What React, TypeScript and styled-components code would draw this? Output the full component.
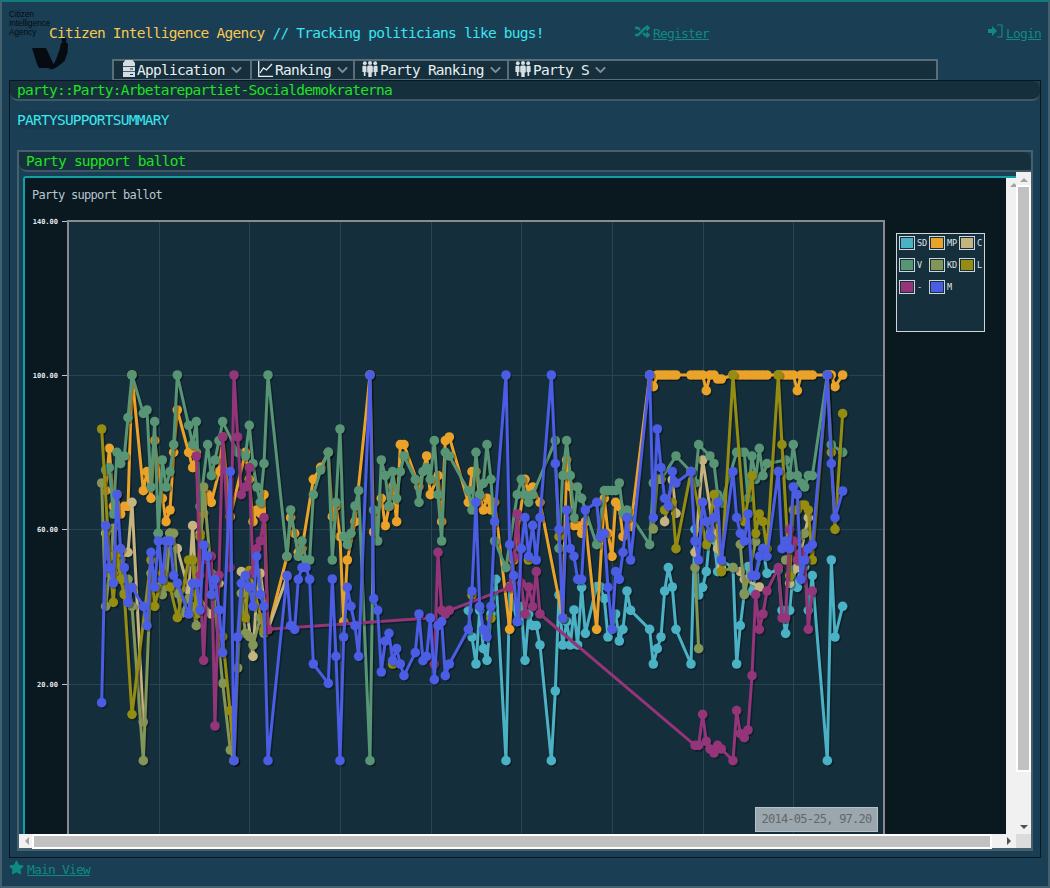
import React from "react";
import styled, { createGlobalStyle } from "styled-components";
import { FaChevronDown, FaRandom, FaStar } from "react-icons/fa";

const GlobalStyle = createGlobalStyle`
  html, body {
    margin: 0;
    padding: 0;
    background: #1a3e54;
    font-family: "DejaVu Sans Mono", "Liberation Mono", monospace;
    font-size: 14.5px;
    letter-spacing: -0.75px;
  }
`;

const Page = styled.div`
  box-sizing: border-box;
  width: 1050px;
  height: 888px;
  overflow: hidden;
  background: #1a3e54;
  border: 2px solid #42606e;
  border-top-color: #127b78;
`;

const Header = styled.header`
  display: grid;
  grid-template-columns: 7px 40px 586px 353px 1fr;
  height: 57px;
`;

const LogoBlock = styled.div`
  grid-column: 2;
  padding-top: 8px;
`;

const LogoText = styled.div`
  font-family: "Liberation Sans", Arial, sans-serif;
  font-size: 8.2px;
  line-height: 9px;
  letter-spacing: 0;
  color: #050b10;
  white-space: nowrap;
`;

const LogoMark = styled.svg`
  display: block;
  width: 40px;
  height: 36px;
  margin: 0 0 0 20px;
`;

const Title = styled.h1`
  margin: 0;
  padding-top: 22px;
  font-size: 14.5px;
  line-height: 18px;
  font-weight: 400;
  color: #3be6f0;
  white-space: nowrap;
`;

const TitleAccent = styled.span`
  color: #f9c851;
`;

const HeaderLink = styled.div`
  display: flex;
  align-items: center;
  gap: 3px;
  height: 18px;
  margin-top: 22px;
  color: #0f8a80;
  svg {
    width: 15px;
    height: 15px;
    flex: none;
    margin-top: -3px;
  }
`;

const LinkText = styled.a`
  font-size: 13px;
  letter-spacing: -0.83px;
  color: #0f8a80;
  text-decoration: underline;
`;

const MenuBar = styled.nav`
  box-sizing: border-box;
  display: flex;
  align-items: stretch;
  width: 826px;
  height: 21px;
  margin-left: 110px;
  background: #162f3d;
  border: 2px solid #5a6e7a;
  border-bottom-width: 1px;
`;

const MenuItem = styled.div<{ $width: number; $pad: number }>`
  box-sizing: border-box;
  display: flex;
  align-items: center;
  gap: 2px;
  width: ${(props) => props.$width}px;
  padding-left: ${(props) => props.$pad}px;
  border-right: 2px solid #5a6e7a;
  color: #e8eef0;
  white-space: nowrap;
  &:last-child {
    border-right: 0;
  }
`;

const MenuIcon = styled.svg`
  flex: none;
  margin-top: -3px;
`;

const Chevron = styled(FaChevronDown)`
  flex: none;
  width: 13px;
  height: 12px;
  margin-left: 3px;
  color: #7d909a;
`;

const Panel = styled.main`
  box-sizing: border-box;
  width: 1032px;
  height: 778px;
  margin-left: 7px;
  border: 1px solid #08161d;
`;

const PathBar = styled.div`
  box-sizing: border-box;
  height: 20px;
  padding-left: 7px;
  background: #162f3d;
  border-bottom: 2px solid #3e5866;
  border-radius: 0 8px 8px 8px;
  color: #1fe21f;
  line-height: 18px;
  white-space: nowrap;
`;

const SectionLabel = styled.div`
  width: fit-content;
  height: 18px;
  margin: 10px 0 0 7px;
  border-radius: 8px;
  background: rgba(0, 0, 0, 0.05);
  color: #3be6f0;
  line-height: 18px;
`;

const InnerPanel = styled.section`
  box-sizing: border-box;
  width: 1016px;
  height: 701px;
  margin: 21px 0 0 7px;
  border: 2px solid #47606d;
  border-bottom-width: 3px;
`;

const InnerHeader = styled.div`
  box-sizing: border-box;
  height: 20px;
  padding-left: 7px;
  background: #162f3d;
  border-bottom: 2px solid #3e5866;
  border-radius: 0 8px 0 8px;
  color: #1fe21f;
  line-height: 18px;
`;

const ScrollFrame = styled.div`
  display: grid;
  grid-template-columns: 997px 15px;
  grid-template-rows: 662px 14px;
`;

const Viewport = styled.div`
  overflow: hidden;
  background: #1a3e54;
`;

const Card = styled.div`
  box-sizing: border-box;
  display: flex;
  width: 1000px;
  height: 708px;
  margin: 4px;
  border: 2px solid #12a0a8;
  border-radius: 3px 0 0 0;
  background: #0a1920;
  overflow: hidden;
`;

const CardBody = styled.div`
  position: relative;
  flex: none;
  width: 981px;
  height: 800px;
`;

const InnerTrack = styled.div`
  flex: none;
  display: flex;
  justify-content: center;
  width: 15px;
  padding-top: 5px;
  background: #f1f1f1;
`;

const VBar = styled.div`
  display: flex;
  flex-direction: column;
  align-items: center;
  background: #f1f1f1;
`;

const HBar = styled.div`
  display: flex;
  align-items: center;
  background: #f1f1f1;
`;

const ArrowCell = styled.div`
  flex: none;
  display: flex;
  align-items: center;
  justify-content: center;
  width: 15px;
  height: 15px;
`;

const Arrow = styled.span<{ $dir: "up" | "down" | "left" | "right"; $dark?: boolean }>`
  display: block;
  width: 0;
  height: 0;
  border: 4px solid transparent;
  ${(props) => `border-${{ up: "bottom", down: "top", left: "right", right: "left" }[props.$dir]}-color: ${props.$dark ? "#505050" : "#a3a3a3"};`}
  ${(props) => `border-${props.$dir === "up" ? "top" : props.$dir === "down" ? "bottom" : props.$dir}-width: 0;`}
`;

const VThumb = styled.div`
  width: 11px;
  height: 583px;
  margin-bottom: auto;
  background: #c1c1c1;
  box-shadow: 0 0 0 2px #fff;
`;

const HThumb = styled.div`
  width: 956px;
  height: 11px;
  margin-right: auto;
  background: #c1c1c1;
  box-shadow: 0 0 0 2px #fff;
`;

const Corner = styled.div`
  background: #dcdcdc;
`;

const ChartTitle = styled.div`
  height: 30px;
  padding: 9px 0 0 7px;
  box-sizing: border-box;
  color: #b9c6cf;
  font-size: 12px;
  letter-spacing: -0.72px;
  line-height: 16px;
`;

const ChartSvg = styled.svg`
  display: block;
`;

const TickLabel = styled.text`
  fill: #e4e9ec;
  font-family: "DejaVu Sans Mono", monospace;
  font-size: 7px;
  font-weight: 700;
  letter-spacing: 0;
`;

const Legend = styled.div`
  position: absolute;
  left: 871px;
  top: 55px;
  box-sizing: border-box;
  width: 89px;
  height: 99px;
  padding: 2px;
  display: grid;
  grid-template-columns: repeat(3, 30px);
  grid-auto-rows: 22px;
  background: #152f3d;
  border: 1px solid #cfd6da;
`;

const LegendEntry = styled.div`
  display: flex;
  gap: 2px;
  height: 14px;
  color: #dfe5e8;
  font-size: 8.5px;
  letter-spacing: 0;
  line-height: 14px;
`;

const Swatch = styled.span<{ $color: string }>`
  box-sizing: border-box;
  flex: none;
  width: 16px;
  height: 14px;
  border: 1px solid #cfd6da;
  box-shadow: inset 0 0 0 1px #152f3d;
  background: ${(props) => props.$color};
`;

const Tooltip = styled.div`
  position: absolute;
  left: 730px;
  top: 629px;
  box-sizing: border-box;
  width: 123px;
  height: 25px;
  background: #9aa7ae;
  border: 1px solid #b7c2c8;
  color: #666;
  font-size: 12px;
  letter-spacing: -0.75px;
  line-height: 23px;
  text-align: center;
  white-space: nowrap;
`;

const Footer = styled.footer`
  display: flex;
  align-items: center;
  gap: 3px;
  height: 20px;
  margin: 1px 0 0 7px;
  color: #0f8a80;
  svg {
    width: 15px;
    height: 15px;
    margin-top: -4px;
  }
`;

type Pt = [number, number];

// points read off the reference, in crop coordinates (3x), one crop per chunk of the plot
const crop = (offset: number, flat: number[]): Pt[] => {
  const out: Pt[] = [];
  for (let i = 0; i < flat.length; i += 2) out.push([offset + flat[i] / 3, 360 + flat[i + 1] / 3]);
  return out;
};

const A = 60;
const B = 320;
const C = 600;

const SERIES: { name: string; color: string; segments: Pt[][] }[] = [
  {
    name: "SD",
    color: "#4bb2c5",
    segments: [
      [
        ...crop(B, [445, 751, 456, 831, 468, 912, 479, 751, 490, 866, 501, 901, 513, 762, 528, 658, 558, 1202, 569, 680, 581, 740, 592, 785, 604, 740, 615, 901, 626, 762, 638, 797, 649, 797, 660, 855, 694, 1202, 706, 993, 717, 705, 728, 855, 740, 785, 751, 855, 762, 750, 773, 855, 785, 682, 796, 820, 830, 680]),
        ...crop(C, [0, 680, 13, 716, 24, 831, 36, 808, 47, 762, 58, 843, 69, 808, 81, 693, 92, 751, 149, 808, 160, 912, 172, 866, 183, 831, 194, 693, 205, 623, 217, 681, 228, 808, 273, 912, 285, 508, 296, 705, 308, 682, 319, 635, 330, 520, 342, 540, 353, 635, 364, 600, 399, 623, 410, 912, 421, 797, 433, 700, 444, 620, 456, 693, 467, 647, 489, 566, 501, 640, 535, 630, 546, 751, 557, 820, 569, 751, 580, 630, 592, 682, 603, 600, 614, 620, 625, 751, 637, 647, 682, 1202, 694, 600, 705, 831, 728, 739]),
      ],
    ],
  },
  {
    name: "MP",
    color: "#eaa228",
    segments: [
      [
        ...crop(A, [137, 392, 148, 265, 160, 439, 171, 404, 182, 462, 193, 439, 204, 439, 216, 45, 250, 392, 261, 335, 273, 415, 284, 242, 307, 415, 318, 485, 330, 450, 341, 277, 352, 150, 386, 277, 398, 323, 409, 277, 420, 520, 431, 460, 443, 404, 454, 427, 477, 335, 488, 231, 511, 470, 556, 277, 568, 358, 579, 485, 590, 450, 601, 460, 612, 404, 624, 810, 681, 590, 692, 473, 704, 520, 715, 577, 726, 566, 760, 358, 782, 322]),
        ...crop(B, [25, 277, 37, 470, 48, 438, 60, 530, 71, 785, 82, 600, 105, 485, 150, 45, 161, 516, 184, 415, 196, 497, 207, 440, 218, 380, 230, 485, 241, 254, 252, 254, 297, 380, 320, 288, 331, 404, 354, 347, 365, 485, 376, 242, 388, 231, 445, 427, 456, 335, 468, 335, 479, 404, 490, 450, 501, 415, 513, 450, 524, 427, 569, 808, 581, 600, 615, 358, 626, 404, 638, 381, 660, 427, 728, 774, 740, 300, 751, 380, 762, 497, 773, 497, 785, 520, 796, 485, 830, 808]),
        ...crop(C, [13, 415, 24, 520, 36, 589, 47, 427, 58, 440, 69, 530, 92, 500, 149, 45, 160, 80, 172, 45, 183, 45, 194, 45, 205, 45, 217, 45, 228, 45, 273, 45, 285, 45, 296, 45, 308, 45, 319, 92, 330, 45, 342, 45, 353, 57, 364, 57, 399, 45, 410, 45, 421, 45, 433, 45, 444, 45, 456, 45, 467, 45, 478, 45, 489, 45, 501, 45, 535, 45, 546, 45, 557, 45, 569, 45, 580, 45, 592, 92, 603, 45, 614, 45, 625, 45, 637, 45, 682, 45, 694, 45, 705, 80, 728, 45]),
      ],
    ],
  },
  {
    name: "C",
    color: "#c5b47f",
    segments: [
      crop(A, [137, 520, 160, 640, 182, 600, 204, 577, 216, 427, 250, 1086]),
      crop(A, [295, 520, 307, 680, 330, 520, 352, 566, 386, 690, 398, 497, 409, 700, 454, 762, 477, 670]),
      crop(A, [544, 635, 579, 889, 590, 700, 601, 640, 624, 808, 681, 650]),
      crop(C, [194, 485, 217, 360, 228, 460]),
      crop(C, [285, 577, 308, 300, 342, 520, 353, 566, 364, 623]),
      crop(C, [421, 635, 433, 658, 478, 681]),
      crop(C, [569, 670, 592, 623, 625, 473]),
    ],
  },
  {
    name: "V",
    color: "#579575",
    segments: [
      [
        ...crop(A, [137, 330, 148, 323, 160, 462, 171, 277, 182, 311, 193, 288, 204, 173, 216, 45, 250, 160, 261, 150, 273, 381, 284, 185, 295, 520, 307, 300, 318, 381, 330, 335, 341, 254, 352, 45, 386, 196, 398, 254, 409, 185, 420, 439, 443, 254, 454, 347, 465, 300, 477, 242, 488, 185, 533, 277, 556, 288, 568, 196, 579, 311, 590, 381, 601, 427, 612, 311, 624, 45, 681, 589, 692, 450, 715, 589, 726, 543, 738, 600, 749, 600, 760, 404, 782, 330]),
        ...crop(B, [25, 277, 37, 600, 48, 427, 60, 207, 71, 530, 82, 554, 93, 520, 105, 438, 116, 392, 150, 1202, 161, 450, 173, 543, 184, 300, 196, 347, 207, 438, 218, 335, 230, 415, 241, 335, 252, 288, 286, 358, 297, 427, 309, 335, 320, 323, 331, 358, 343, 242, 354, 404, 365, 543, 376, 277, 388, 288, 445, 392, 456, 450, 468, 277, 479, 404, 490, 370, 501, 254, 513, 358, 524, 543, 558, 623, 592, 404, 604, 358, 615, 404, 626, 427, 638, 404, 706, 242, 717, 565, 728, 347, 740, 242, 751, 347, 762, 473, 773, 381, 785, 415, 830, 554]),
        ...crop(C, [13, 392, 24, 392, 36, 392, 47, 392, 58, 369, 69, 460, 81, 450, 149, 554, 160, 369, 172, 358, 183, 358, 228, 288, 273, 335, 285, 369, 296, 254, 330, 288, 342, 311, 353, 404, 364, 430, 410, 277, 421, 277, 433, 277, 444, 415, 456, 288, 467, 358, 478, 265, 489, 347, 501, 311, 557, 300, 569, 347, 580, 254, 592, 347, 603, 369, 614, 381, 625, 347, 637, 347, 682, 45, 694, 254, 728, 277]),
      ],
    ],
  },
  {
    name: "KD",
    color: "#839557",
    segments: [
      crop(A, [125, 369, 137, 739, 148, 640, 160, 505, 171, 600, 182, 600, 193, 700, 204, 658, 216, 739, 250, 1202, 273, 640, 295, 681, 307, 704, 318, 680, 330, 520, 341, 520, 352, 700, 364, 760, 386, 716, 398, 739, 409, 797, 431, 381, 454, 640, 488, 970, 511, 1170, 522, 1202, 533, 924, 544, 700, 556, 820, 568, 830, 579, 855, 601, 773, 612, 820]),
      crop(C, [160, 507, 172, 358, 183, 358]),
      crop(C, [285, 623, 296, 866]),
      crop(C, [364, 635, 399, 623]),
      crop(C, [421, 553, 433, 704, 467, 545]),
      crop(C, [557, 600, 614, 520]),
    ],
  },
  {
    name: "L",
    color: "#958c12",
    segments: [
      crop(A, [125, 207, 148, 590, 160, 727, 171, 580, 182, 658, 193, 704, 216, 1063, 273, 600, 284, 739, 307, 640, 330, 681, 352, 773, 386, 600, 398, 600, 409, 762, 420, 530]),
      crop(A, [488, 830, 510, 1052, 522, 1202]),
      crop(A, [556, 773, 568, 632, 612, 810]),
      ...crop(B, [218, 912, 456, 705, 513, 775, 625, 600, 717, 530]).map((p) => [p]),
      crop(C, [194, 450, 217, 427, 228, 566, 273, 335, 319, 554, 342, 404, 364, 635, 399, 45, 433, 485, 456, 347, 467, 520, 478, 462, 489, 485, 501, 566, 535, 45, 546, 254, 569, 647, 580, 450, 592, 450, 603, 435, 614, 435, 625, 450, 637, 600, 682, 45, 694, 277, 705, 508, 728, 161]),
    ],
  },
  {
    name: "-",
    color: "#953579",
    segments: [
      [
        ...crop(A, [409, 288, 420, 646, 431, 901, 443, 600, 454, 589, 465, 1098, 477, 646, 488, 231, 511, 623, 522, 45, 533, 231, 544, 404, 556, 381, 568, 323, 579, 640, 590, 566, 601, 543, 612, 473, 624, 808]),
        ...crop(B, [331, 774, 343, 912, 354, 577, 365, 751, 376, 762, 388, 751, 569, 682, 581, 590, 592, 462, 604, 670, 615, 762, 626, 681, 638, 740, 649, 635, 660, 762]),
        ...crop(C, [285, 1156, 296, 1156, 308, 1063, 319, 1144, 330, 1167, 342, 1179, 353, 1156, 364, 1167, 399, 1202, 410, 1052, 421, 1121, 433, 1133, 444, 1110, 456, 947, 467, 704, 478, 808, 489, 762, 501, 693, 535, 623, 546, 774, 557, 774, 569, 508, 580, 543, 592, 600, 603, 577, 614, 600, 625, 808, 637, 693]),
      ],
    ],
  },
  {
    name: "M",
    color: "#4b5de4",
    segments: [
      [
        ...crop(A, [125, 1028, 137, 497, 148, 623, 160, 669, 171, 404, 182, 566, 193, 623, 204, 727, 216, 682, 250, 739, 261, 797, 273, 577, 284, 681, 295, 543, 307, 658, 318, 543, 330, 543, 341, 646, 352, 669, 386, 762, 398, 670, 409, 670, 420, 750, 431, 555, 443, 589, 454, 704, 465, 658, 477, 750, 488, 878, 511, 335, 522, 1202, 533, 831, 544, 670, 556, 647, 568, 681, 579, 739, 590, 589, 601, 704, 612, 739, 624, 1202, 681, 647, 692, 797, 704, 808, 715, 658, 726, 623, 738, 623, 749, 658, 760, 912]),
        ...crop(B, [25, 970, 37, 657, 48, 889, 60, 1202, 71, 831, 82, 682, 93, 739, 105, 797, 116, 889, 150, 45, 161, 716, 173, 751, 184, 936, 196, 843, 207, 820, 218, 902, 230, 866, 241, 912, 252, 947, 286, 878, 297, 762, 309, 902, 320, 889, 331, 774, 343, 959, 354, 797, 365, 785, 376, 947, 388, 912, 445, 808, 456, 693, 468, 427, 479, 739, 490, 808, 501, 831, 513, 739, 524, 485, 558, 45, 569, 554, 581, 647, 592, 785, 604, 566, 615, 473, 626, 589, 638, 496, 649, 600, 660, 473, 694, 45, 706, 311, 717, 508, 728, 774, 740, 450, 751, 566, 762, 589, 773, 658, 785, 658, 796, 450, 830, 427]),
        ...crop(C, [0, 530, 13, 520, 24, 682, 36, 808, 47, 635, 58, 658, 69, 577, 81, 473, 92, 600, 149, 45, 160, 473, 172, 207, 183, 323, 194, 415, 205, 438, 217, 335, 228, 369, 273, 335, 285, 543, 296, 600, 308, 427, 319, 485, 330, 530, 342, 473, 353, 427, 364, 600, 399, 335, 410, 473, 421, 520, 433, 543, 444, 462, 456, 647, 467, 647, 478, 589, 489, 566, 501, 589, 535, 335, 546, 566, 557, 543, 569, 566, 580, 381, 592, 404, 603, 658, 614, 600, 625, 566, 637, 554, 682, 45, 694, 311, 705, 473, 728, 393]),
      ],
    ],
  },
];

const X_GRID = [159, 249, 340, 431, 521, 612, 703, 793];
const Y_TICKS: { y: number; label: string }[] = [
  { y: 221, label: "140.00" },
  { y: 375, label: "100.00" },
  { y: 529.5, label: "60.00" },
  { y: 684, label: "20.00" },
];

const Series = ({ color, segments }: { color: string; segments: Pt[][] }) => {
  const lines = segments.map((seg) => seg.map((p) => p.join(",")).join(" "));
  const dots = segments.flat();
  return (
    <g>
      {lines.map((line, i) => (
        <polyline key={i} points={line} fill="none" stroke="#000" strokeOpacity={0.3} strokeWidth={3} transform="translate(1.5 1.5)" />
      ))}
      {dots.map((p, i) => (
        <circle key={i} cx={p[0] + 1.5} cy={p[1] + 1.5} r={4.8} fill="#000" fillOpacity={0.3} />
      ))}
      {lines.map((line, i) => (
        <polyline key={i} points={line} fill="none" stroke={color} strokeWidth={3} strokeLinejoin="round" />
      ))}
      {dots.map((p, i) => (
        <circle key={i} cx={p[0]} cy={p[1]} r={4.8} fill={color} />
      ))}
    </g>
  );
};

const Chart = () => (
  <ChartSvg width={981} height={770} viewBox="25 208 981 770">
    <rect x={68} y={221} width={816} height={740} fill="#142e3c" stroke="#8a8a8a" strokeWidth={2} />
    {X_GRID.map((x) => (
      <line key={x} x1={x + 0.5} x2={x + 0.5} y1={222} y2={960} stroke="#2a4552" shapeRendering="crispEdges" />
    ))}
    {Y_TICKS.map((t) => (
      <g key={t.y} shapeRendering="crispEdges">
        {t.y > 221 && <line x1={69} x2={883} y1={t.y} y2={t.y} stroke="#2a4552" />}
        <line x1={62} x2={67} y1={t.y} y2={t.y} stroke="#b9c6cf" />
        <TickLabel x={58} y={t.y + 2.5} textAnchor="end">
          {t.label}
        </TickLabel>
      </g>
    ))}
    {SERIES.map((s) => (
      <Series key={s.name} color={s.color} segments={s.segments} />
    ))}
  </ChartSvg>
);

const ServerIcon = () => (
  <MenuIcon width={12} height={17} viewBox="0 0 12 17" fill="#d4dde2">
    <path d="M2.500 0h7L12 3v3H0V3z" />
    <rect y={6.800} width={12} height={4.500} />
    <rect y={12} width={12} height={5} />
    <rect x={7} y={8.500} width={3} height={1} fill="#162f3d" />
    <rect x={7} y={14} width={3} height={1} fill="#162f3d" />
  </MenuIcon>
);

const ChartIcon = () => (
  <MenuIcon width={15} height={16} viewBox="0 0 15 16" fill="none" stroke="#e8eef0" strokeWidth={1.3}>
    <path d="M0.700 0v15.300H15" />
    <path d="M2 12l3.500-5 3 2L14 3" />
  </MenuIcon>
);

const GroupIcon = () => (
  <MenuIcon width={16} height={16} viewBox="0 0 16 16" fill="#d8e0e4">
    <circle cx={2.800} cy={2.200} r={1.900} />
    <circle cx={8} cy={2} r={2} />
    <circle cx={13.200} cy={2.200} r={1.900} />
    <path d="M1 4.800h2.800l.7 1v5.200H3.500V15H1.800v-4H.4V5.500z" />
    <path d="M6.200 4.600h3.600l1 1v5.900H9.700V16H6.300v-4.500H5.200V5.600z" />
    <path d="M12.200 4.800H15l.6.700V11h-1.400v4h-1.700v-4h-1V5.800z" />
  </MenuIcon>
);

const App = () => (
  <Page>
    <GlobalStyle />
    <Header>
      <LogoBlock>
        <LogoText>
          Citizen
          <br />
          Intelligence
          <br />
          Agency
        </LogoText>
        <LogoMark viewBox="0 0 40 36" fill="#050b10">
          <path d="M3 11h14l7 15 1.500 2-2 3H10l-2-4z" />
          <path d="M25 27l3-7 3-9 1-5 4-2 3 3-.5 9-3 8-6 5-5 3-5 .5 4-3z" />
          <circle cx={35} cy={2.500} r={2.500} />
        </LogoMark>
      </LogoBlock>
      <Title>
        <TitleAccent>Citizen Intelligence Agency</TitleAccent> // Tracking politicians like bugs!
      </Title>
      <HeaderLink>
        <FaRandom />
        <LinkText>Register</LinkText>
      </HeaderLink>
      <HeaderLink>
        <svg viewBox="0 0 15 15" fill="none">
          <path d="M0 5h4V2l5 5-5 5V9H0z" fill="currentColor" />
          <path d="M9 1h5v12H9" stroke="currentColor" strokeWidth={1.2} />
        </svg>
        <LinkText>Login</LinkText>
      </HeaderLink>
    </Header>
    <MenuBar>
      <MenuItem $width={138} $pad={9}>
        <ServerIcon />
        <span>Application</span>
        <Chevron />
      </MenuItem>
      <MenuItem $width={103} $pad={6}>
        <ChartIcon />
        <span>Ranking</span>
        <Chevron />
      </MenuItem>
      <MenuItem $width={154} $pad={7}>
        <GroupIcon />
        <span>Party Ranking</span>
        <Chevron />
      </MenuItem>
      <MenuItem $width={427} $pad={6}>
        <GroupIcon />
        <span>Party S</span>
        <Chevron />
      </MenuItem>
    </MenuBar>
    <Panel>
      <PathBar>party::Party:Arbetarepartiet-Socialdemokraterna</PathBar>
      <SectionLabel>PARTYSUPPORTSUMMARY</SectionLabel>
      <InnerPanel>
        <InnerHeader>Party support ballot</InnerHeader>
        <ScrollFrame>
          <Viewport>
            <Card>
              <CardBody>
                <ChartTitle>Party support ballot</ChartTitle>
                <Chart />
                <Legend>
                  {SERIES.map((s) => (
                    <LegendEntry key={s.name}>
                      <Swatch $color={s.color} />
                      {s.name}
                    </LegendEntry>
                  ))}
                </Legend>
                <Tooltip>2014-05-25, 97.20</Tooltip>
              </CardBody>
              <InnerTrack>
                <Arrow $dir="up" />
              </InnerTrack>
            </Card>
          </Viewport>
          <VBar>
            <ArrowCell>
              <Arrow $dir="up" />
            </ArrowCell>
            <VThumb />
            <ArrowCell>
              <Arrow $dir="down" $dark />
            </ArrowCell>
          </VBar>
          <HBar>
            <ArrowCell>
              <Arrow $dir="left" />
            </ArrowCell>
            <HThumb />
            <ArrowCell>
              <Arrow $dir="right" $dark />
            </ArrowCell>
          </HBar>
          <Corner />
        </ScrollFrame>
      </InnerPanel>
    </Panel>
    <Footer>
      <FaStar />
      <LinkText>Main View</LinkText>
    </Footer>
  </Page>
);

export default App;
